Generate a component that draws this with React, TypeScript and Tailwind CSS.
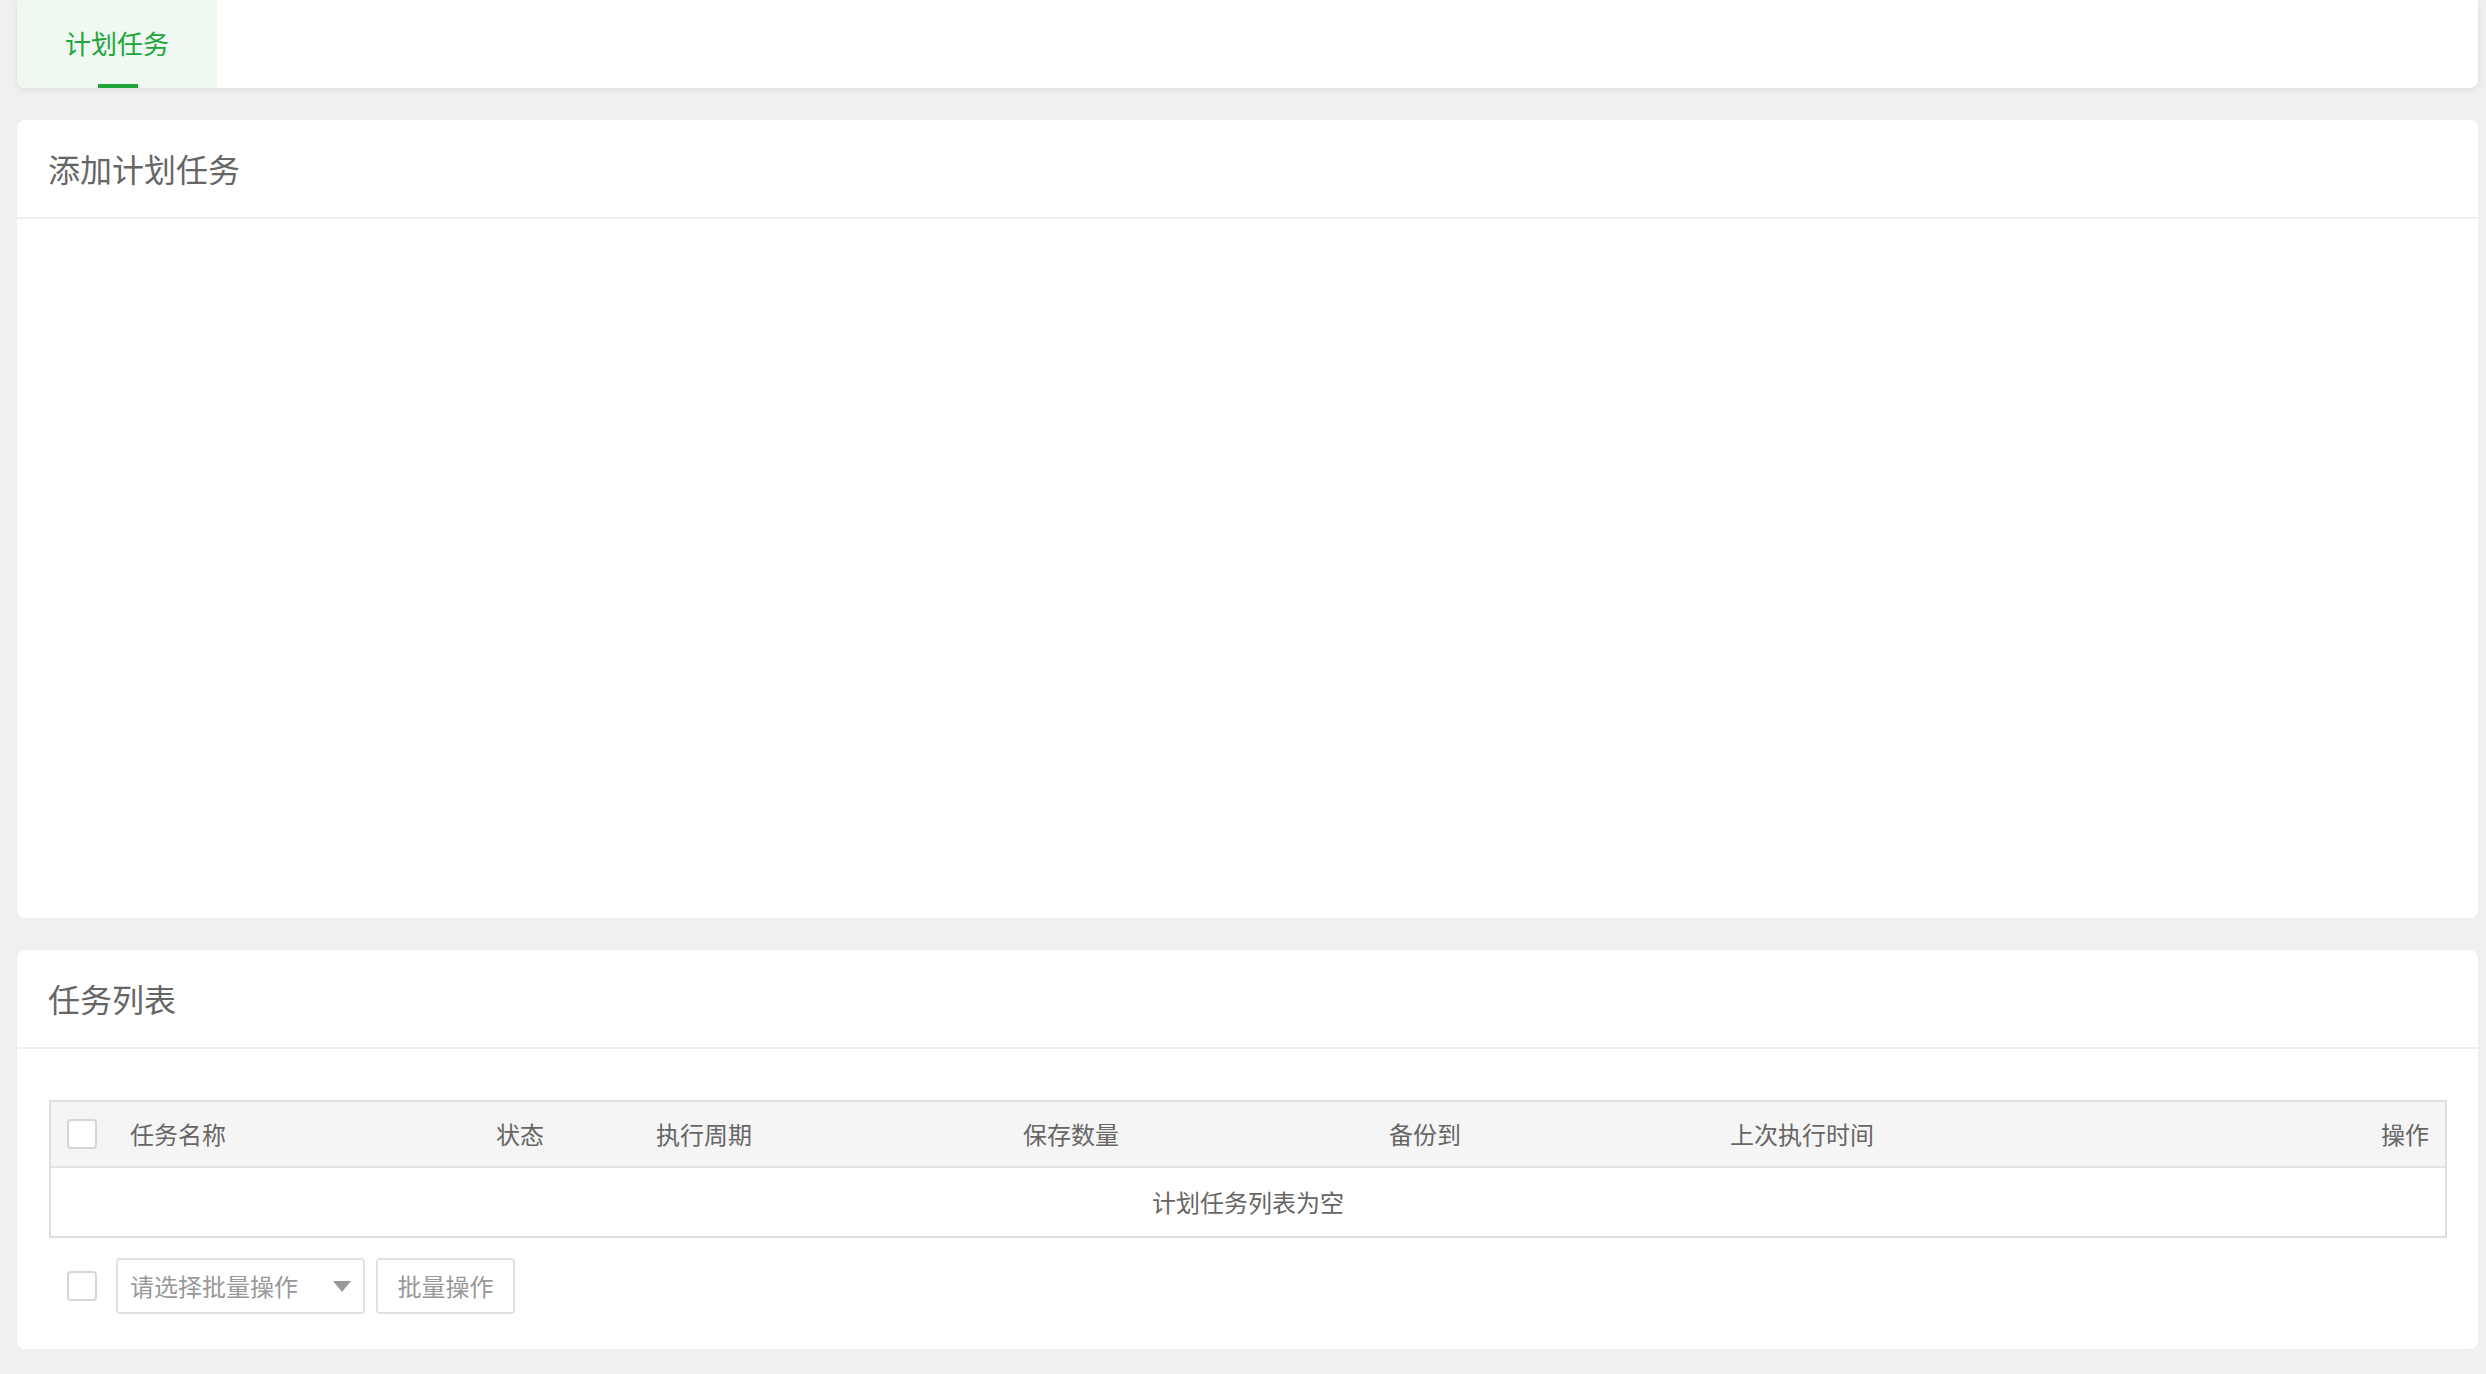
import React from 'react';

const columns = ['状态', '执行周期', '保存数量', '备份到', '上次执行时间'];

function Checkbox() {
  return (
    <span className="block w-[30px] h-[30px] rounded-[4px] border-2 border-[#d6d6d6] bg-white" />
  );
}

function CardHeader({ title }: { title: string }) {
  return (
    <div className="h-[99px] flex items-center px-[31px] border-b-2 border-[#efefef]">
      <h2 className="text-[32px] text-[#666] leading-none -mt-[2px]">{title}</h2>
    </div>
  );
}

export default function App() {
  return (
    <div
      className="min-h-screen bg-[#f0f0f0] pl-[17px] pr-[8px] pb-[26px]"
      style={{ fontFamily: '"Noto Sans CJK SC", "Noto Sans", sans-serif' }}
    >
      {/* tab bar */}
      <div className="h-[88px] bg-white rounded-b-[8px] shadow-[0_2px_6px_rgba(0,0,0,0.08)] flex">
        <div className="relative w-[200px] h-full bg-[#eff8f1] rounded-bl-[8px] flex items-center justify-center">
          <span className="text-[26px] text-[#20a53a] leading-none -mt-[2px]">计划任务</span>
          <span className="absolute bottom-0 left-[81px] w-[40px] h-[4px] bg-[#20a53a]" />
        </div>
      </div>

      {/* add task */}
      <div className="mt-[32px] bg-white rounded-[8px]">
        <CardHeader title="添加计划任务" />
        <div className="h-[699px]" />
      </div>

      {/* task list */}
      <div className="mt-[32px] bg-white rounded-[8px]">
        <CardHeader title="任务列表" />
        <div className="pt-[51px] pl-[32px] pr-[31px] pb-[35px]">
          <div className="border-2 border-[#dedede] text-[24px] text-[#666]">
            <div className="h-[66px] bg-[#f5f5f5] border-b-2 border-[#e3e3e3] grid grid-cols-[79px_366px_160px_367px_366px_341px_1fr_auto] items-center">
              <div className="pl-[16px]">
                <Checkbox />
              </div>
              <div>任务名称</div>
              {columns.map((c) => (
                <div key={c}>{c}</div>
              ))}
              <div className="text-right pr-[16px]">操作</div>
            </div>
            <div className="h-[68px] flex items-center justify-center">计划任务列表为空</div>
          </div>

          <div className="mt-[20px] flex items-center">
            <div className="pl-[18px]">
              <Checkbox />
            </div>
            <div className="ml-[19px] w-[249px] h-[56px] border-2 border-[#e2e2e2] rounded-[4px] flex items-center justify-between pl-[12px] pr-[12px] text-[24px] text-[#999]">
              <span>请选择批量操作</span>
              <svg width="18" height="11" viewBox="0 0 18 11">
                <path d="M0 0 L18 0 L9 11 Z" fill="#999" />
              </svg>
            </div>
            <button className="ml-[11px] w-[139px] h-[56px] border-2 border-[#e2e2e2] rounded-[4px] text-[24px] text-[#999] bg-white">
              批量操作
            </button>
          </div>
        </div>
      </div>
    </div>
  );
}
